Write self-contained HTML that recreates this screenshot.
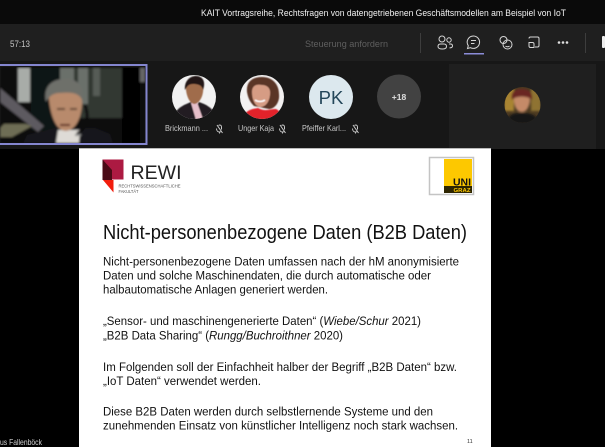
<!DOCTYPE html>
<html><head><meta charset="utf-8"><style>
html,body{margin:0;padding:0;background:#000;width:605px;height:447px;overflow:hidden}
svg{display:block}
text{font-family:"Liberation Sans",sans-serif}
</style></head><body>
<svg width="605" height="447" viewBox="0 0 605 447" xmlns="http://www.w3.org/2000/svg">
<defs>
<filter id="b1" x="-10%" y="-10%" width="120%" height="120%"><feGaussianBlur stdDeviation="1"/></filter>
<filter id="b2" x="-10%" y="-10%" width="120%" height="120%"><feGaussianBlur stdDeviation=".6"/></filter>
<clipPath id="v"><rect x="0" y="67" width="145" height="76"/></clipPath>
<clipPath id="c1"><circle cx="194" cy="97" r="22"/></clipPath>
<clipPath id="c2"><circle cx="262" cy="97" r="22"/></clipPath>
<clipPath id="c3"><circle cx="522.500" cy="105" r="18"/></clipPath>
</defs>
<rect width="605" height="447" fill="#000"/>
<rect width="605" height="24" fill="#0a0a0a"/>
<rect y="24" width="605" height="37" fill="#1f1f1f"/>
<rect y="61" width="605" height="88" fill="#171717"/>
<rect x="449" y="64" width="147" height="85" fill="#1f1f1f"/>
<rect x="491" y="149" width="114" height="298" fill="#000"/>
<text x="201" y="16" font-size="9.500" fill="#f2f2f2" textLength="365" lengthAdjust="spacingAndGlyphs">KAIT Vortragsreihe, Rechtsfragen von datengetriebenen Geschäftsmodellen am Beispiel von IoT</text>
<text x="10" y="47" font-size="9.500" fill="#c4c4c4" textLength="20" lengthAdjust="spacingAndGlyphs">57:13</text>
<text x="305" y="47" font-size="9.500" fill="#5f5f5f" textLength="83" lengthAdjust="spacingAndGlyphs">Steuerung anfordern</text>
<rect x="420" y="33" width="1" height="20" fill="#3d3d3d"/>
<rect x="585" y="33" width="1" height="20" fill="#3d3d3d"/>

<g fill="none" stroke="#d6d6d6" stroke-width="1">
<circle cx="442" cy="39" r="3"/><circle cx="449" cy="40" r="2.200"/>
<path d="M438 46.500c0-1.600 1-2.500 2.500-2.500h3.500c1.500 0 2.500.9 2.500 2.500 0 1.500-1.600 2.500-4.200 2.500s-4.300-1-4.300-2.500zM449 44h1.500c1.200 0 2 .7 2 1.900 0 1.200-1 2-3 2"/>
<path d="M473.500 36a6.200 6.200 0 1 1-3 11.700l-3 .8.800-2.800A6.200 6.200 0 0 1 473.500 36z"/>
<path d="M471 40.500h5M471 43.500h3.500"/>
<circle cx="503.500" cy="40" r="3.500"/><circle cx="507.500" cy="44.500" r="4.500"/>
<path d="M505.500 46c.8 1 3 1 4 0"/>
<path d="M529 38.500c0-1 .6-1.500 1.500-1.500h7c1 0 1.500.6 1.500 1.500v7c0 1-.6 1.500-1.500 1.500H535M529 42.500h3.500c.9 0 1.500.6 1.500 1.500v3.500h-3.500c-1 0-1.500-.6-1.500-1.500z"/>
</g>
<rect x="464" y="53" width="20" height="1.500" fill="#8b8cd8"/>
<circle cx="559" cy="42.500" r="1.300" fill="#e0e0e0"/><circle cx="563" cy="42.500" r="1.300" fill="#e0e0e0"/><circle cx="567" cy="42.500" r="1.300" fill="#e0e0e0"/>
<rect x="602" y="36" width="3" height="12" rx="1" fill="#eee"/>

<g clip-path="url(#v)"><g filter="url(#b1)">
<rect x="0" y="66" width="146" height="78" fill="#0a0b09"/>
<rect x="18" y="68" width="12" height="34" fill="#a8aca8"/>
<rect x="60" y="68" width="62" height="50" fill="#333833"/>
<rect x="78" y="68" width="10" height="36" fill="#6a706b"/>
<rect x="60" y="68" width="14" height="16" fill="#6a706b"/>
<rect x="93" y="68" width="7" height="28" fill="#565b56"/>
<rect x="31" y="68" width="29" height="62" fill="#0f1214"/>
<rect x="122" y="68" width="18" height="75" fill="#040504"/>
<rect x="140" y="68" width="5" height="14" fill="#666"/>
<path d="M0 88L44 126 38 132 0 102z" fill="#5d5a60"/>
<path d="M4 124H26L32 126 12 137H0V128z" fill="#6e6d55"/>
<path d="M23 143L27 135 55 128 95 128 110 134 113 143z" fill="#15141a"/>
<path d="M56 143L58 130 80 130 79 143z" fill="#dedbd6"/>
<path d="M49 100C47 88 53 81 65 81 76 81 83 88 82 105 81 118 76 130 66 131 57 131 51 118 49 100z" fill="#b88a6c"/>
<path d="M46 102C43 88 50 79 65 79 78 78 85 88 82 100 79 93 72 92 60 93 52 93 49 97 46 102z" fill="#6e6f6b"/>
<path d="M57 109h8M70 109h7" stroke="#3f281e" stroke-width="1.600"/>
<path d="M60 125h10" stroke="#5c241e" stroke-width="2"/>
<path d="M85 105C90 120 86 128 77 134" stroke="#070707" stroke-width="3" fill="none"/>
<rect x="75" y="134" width="6" height="2" fill="#888"/>
</g></g>
<rect x="-2" y="65" width="148.500" height="79" fill="none" stroke="#8486cf" stroke-width="2"/>

<circle cx="194" cy="97" r="22" fill="#f2f2f2"/>
<g clip-path="url(#c1)" filter="url(#b2)">
<path d="M172 122C174 108 184 105 191 102L195 108 199 102C208 105 216 110 218 122z" fill="#241e20"/>
<path d="M191 103L197 102 203 119 196 120z" fill="#e6bfca"/>
<path d="M186 90C186 82 191 78 196 78 202 78 204 84 203 92 202 99 198 104 194 104 190 103 187 98 186 90z" fill="#a06c4c"/>
<path d="M185 90C184 81 190 76 196 76 203 76 206 82 203 90 202 85 198 84 193 84 188 84 187 87 185 90z" fill="#241813"/>
</g>
<circle cx="262" cy="97" r="22" fill="#f3f1f1"/>
<g clip-path="url(#c2)" filter="url(#b2)">
<path d="M247 92C246 82 252 77 262 77 273 77 279 85 279 94 280 103 274 109 269 109L254 106C250 102 248 98 247 92z" fill="#5a3526"/>
<path d="M252 92C252 85 257 84 262 85 268 85 271 89 270 95 269 103 265 107 260 107 255 106 252 100 252 92z" fill="#d69c84"/>
<path d="M241 122C244 110 252 109 258 108 265 112 270 109 276 109 282 112 284 118 284 122z" fill="#e2202c"/>
<path d="M255 100c3 2 7 2 10 0" stroke="#fff" stroke-width="1.500" fill="none"/>
</g>
<circle cx="331" cy="97" r="22" fill="#dce8ee"/>
<text x="331" y="104" font-size="18.500" fill="#24475a" text-anchor="middle">PK</text>
<circle cx="399" cy="96.500" r="22" fill="#424242"/>
<text x="399" y="100" font-size="8.500" font-weight="bold" fill="#e0e0e0" text-anchor="middle">+18</text>

<circle cx="522.500" cy="105" r="18" fill="#4c3a22"/>
<g clip-path="url(#c3)" filter="url(#b1)">
<rect x="504" y="87" width="10" height="24" fill="#a88430"/>
<rect x="531" y="87" width="10" height="24" fill="#8f7332"/>
<path d="M506 124C508 113 515 113 522 113 530 113 537 114 539 124z" fill="#141316"/>
<path d="M514 99C515 94 518 93 522 93 527 93 530 95 530 101 529 108 526 112 522 112 517 112 514 107 514 99z" fill="#c58a68"/>
<path d="M512 100C510 91 516 89 522 89 529 89 533 92 532 100 529 96 516 95 512 100z" fill="#6a2620"/>
</g>

<g font-size="8.200" fill="#c8c8c8">
<text x="165" y="131" textLength="43" lengthAdjust="spacingAndGlyphs">Brickmann ...</text>
<text x="238" y="131" textLength="36" lengthAdjust="spacingAndGlyphs">Unger Kaja</text>
<text x="302" y="131" textLength="44" lengthAdjust="spacingAndGlyphs">Pfeiffer Karl...</text>
</g>
<g fill="none" stroke="#c8c8c8" stroke-width="1">
<path d="M217 125l5.500 8M218.500 125.500c1.500-1 3-.3 3 1.500v2.500M216.500 128.500c0 2.500 1.500 3.500 3 3.500 .8 0 1.500-.3 2-.8M219.500 132v1.500"/>
<path d="M280 125l5.500 8M281.500 125.500c1.500-1 3-.3 3 1.500v2.500M279.500 128.500c0 2.500 1.500 3.500 3 3.500 .8 0 1.500-.3 2-.8M282.500 132v1.500"/>
<path d="M353 125l5.500 8M354.500 125.500c1.500-1 3-.3 3 1.500v2.500M352.500 128.500c0 2.500 1.500 3.500 3 3.500 .8 0 1.500-.3 2-.8M355.500 132v1.500"/>
</g>

<rect x="79" y="149" width="412" height="298" fill="#fff"/>
<rect x="79" y="148" width="412" height="1" fill="#bbb"/>

<path d="M102.500 159.500H123.500V179.500H111.500L102.500 170z" fill="#ac1a42"/>
<path d="M102.500 159.500L112 170V180H102.500z" fill="#4a0a16"/>
<path d="M103 180H113.500V192.500z" fill="#f21d0d"/>
<text x="130.500" y="179" font-size="19.500" fill="#222" textLength="51" lengthAdjust="spacingAndGlyphs">REWI</text>
<text x="118.500" y="187.500" font-size="4.600" fill="#555" textLength="62" lengthAdjust="spacingAndGlyphs">RECHTSWISSENSCHAFTLICHE</text>
<text x="118.500" y="193" font-size="4.600" fill="#555" textLength="20" lengthAdjust="spacingAndGlyphs">FAKULTÄT</text>

<rect x="429.500" y="157.500" width="44" height="37" fill="#fff" stroke="#c4c4c4" stroke-width="1.500"/>
<rect x="444" y="159" width="28" height="34" fill="#fdc800"/>
<rect x="444" y="186" width="28" height="7" fill="#2d2500"/>
<text x="453" y="185.500" font-size="10" font-weight="bold" fill="#111" textLength="18" lengthAdjust="spacingAndGlyphs">UNI</text>
<text x="453.500" y="192" font-size="5" font-weight="bold" fill="#fdc800" textLength="17" lengthAdjust="spacingAndGlyphs">GRAZ</text>

<text x="103" y="239" font-size="20" fill="#111" textLength="364" lengthAdjust="spacingAndGlyphs">Nicht-personenbezogene Daten (B2B Daten)</text>
<g font-size="12.300" fill="#111">
<text x="103" y="265.500" textLength="356" lengthAdjust="spacingAndGlyphs">Nicht-personenbezogene Daten umfassen nach der hM anonymisierte</text>
<text x="103" y="279.500" textLength="328" lengthAdjust="spacingAndGlyphs">Daten und solche Maschinendaten, die durch automatische oder</text>
<text x="103" y="293.500" textLength="225" lengthAdjust="spacingAndGlyphs">halbautomatische Anlagen generiert werden.</text>
<text x="103" y="325" textLength="318" lengthAdjust="spacingAndGlyphs">„Sensor- und maschinengenerierte Daten“ (<tspan font-style="italic">Wiebe/Schur</tspan> 2021)</text>
<text x="103" y="339.500" textLength="240" lengthAdjust="spacingAndGlyphs">„B2B Data Sharing“ (<tspan font-style="italic">Rungg/Buchroithner</tspan> 2020)</text>
<text x="103" y="371" textLength="354" lengthAdjust="spacingAndGlyphs">Im Folgenden soll der Einfachheit halber der Begriff „B2B Daten“ bzw.</text>
<text x="103" y="385" textLength="158" lengthAdjust="spacingAndGlyphs">„IoT Daten“ verwendet werden.</text>
<text x="103" y="415.500" textLength="330" lengthAdjust="spacingAndGlyphs">Diese B2B Daten werden durch selbstlernende Systeme und den</text>
<text x="103" y="429.500" textLength="355" lengthAdjust="spacingAndGlyphs">zunehmenden Einsatz von künstlicher Intelligenz noch stark wachsen.</text>
</g>
<text x="467" y="443" font-size="5.500" fill="#333">11</text>
<text x="0" y="445" font-size="8.500" fill="#d0d0d0" textLength="42" lengthAdjust="spacingAndGlyphs">us Fallenböck</text>
</svg>
</body></html>
